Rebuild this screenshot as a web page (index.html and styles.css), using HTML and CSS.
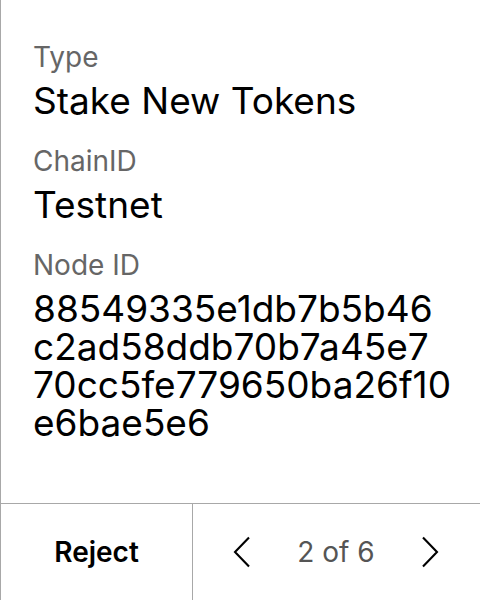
FILE: index.html
```html
<!DOCTYPE html>
<html>
<head>
<meta charset="utf-8">
<link rel="stylesheet" href="styles.css">
</head>
<body>
<div class="screen">
  <div class="content">
    <div class="field">
      <div class="label">Type</div>
      <div class="value">Stake New Tokens</div>
    </div>
    <div class="field">
      <div class="label">ChainID</div>
      <div class="value">Testnet</div>
    </div>
    <div class="field">
      <div class="label">Node ID</div>
      <div class="value hash">88549335e1db7b5b46
c2ad58ddb70b7a45e7
70cc5fe779650ba26f10
e6bae5e6</div>
    </div>
  </div>
  <div class="footer">
    <div class="reject">Reject</div>
    <div class="nav">
      <svg class="chev" width="18" height="32" viewBox="0 0 18 32"><path d="M16 1.5 L2 16 L16 30.5" fill="none" stroke="#000" stroke-width="2.1"/></svg>
      <span class="pager">2 of 6</span>
      <svg class="chev" width="18" height="32" viewBox="0 0 18 32"><path d="M2 1.5 L16 16 L2 30.5" fill="none" stroke="#000" stroke-width="2.1"/></svg>
    </div>
  </div>
</div>
</body>
</html>
```
FILE: styles.css
```css
html, body {
  margin: 0;
  padding: 0;
  background: #fff;
}
.screen {
  width: 480px;
  height: 600px;
  box-sizing: border-box;
  border-left: 1px solid #a8a8a8;
  display: flex;
  flex-direction: column;
  font-family: Inter, "Noto Sans", sans-serif;
  color: #000;
}
.content {
  flex: 1;
  padding: 40px 0 0 32px;
  display: flex;
  flex-direction: column;
  gap: 25px;
}
.label {
  font-size: 28px;
  line-height: 34px;
  color: #666;
}
.value {
  font-size: 37px;
  line-height: 37px;
  margin-top: 8px;
}
.hash {
  line-height: 38px;
  white-space: pre-line;
}
.footer {
  height: 96px;
  border-top: 1px solid #a8a8a8;
  display: flex;
}
.reject {
  width: 191px;
  border-right: 1px solid #a8a8a8;
  display: flex;
  align-items: center;
  justify-content: center;
  font-size: 28px;
  font-weight: 600;
}
.nav {
  flex: 1;
  display: flex;
  align-items: center;
  justify-content: space-between;
  padding: 0 41px 0 40px;
}
.pager {
  font-size: 28px;
  color: #555;
}
```
